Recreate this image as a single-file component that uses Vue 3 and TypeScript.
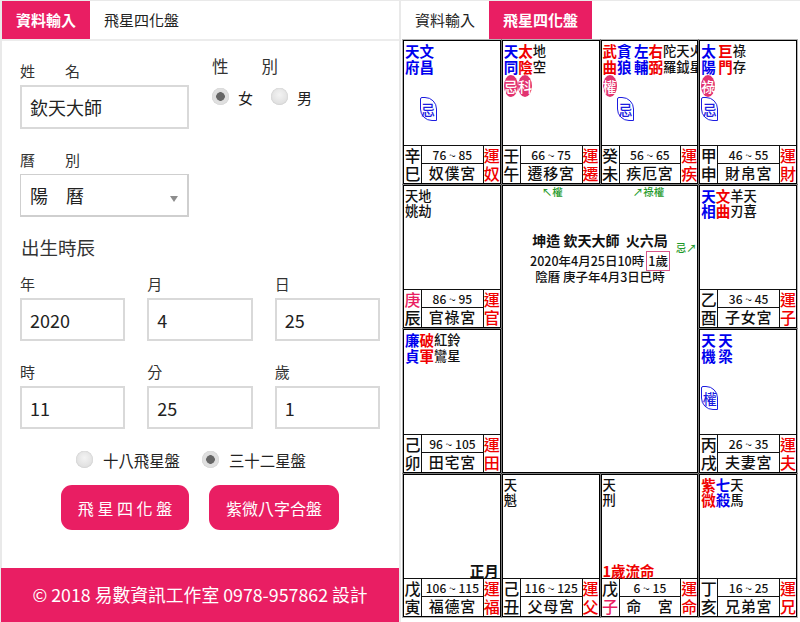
<script setup lang="ts">
interface Star { t: string; c: 'b' | 'r' | 'k'; pink?: string; leaf?: string }
interface Cell {
  stars: Star[]; gan: string; zhi: string; age: string; name: string; yun: string;
  ganPink?: boolean; zhiPink?: boolean; note?: string; noteRed?: boolean;
}
const row1: Cell[] = [
  { stars: [{ t: '天府', c: 'b' }, { t: '文昌', c: 'b', leaf: '忌' }], gan: '辛', zhi: '巳', age: '76 ~ 85', name: '奴僕宮', yun: '奴' },
  { stars: [{ t: '天同', c: 'b', pink: '忌' }, { t: '太陰', c: 'r', pink: '科' }, { t: '地空', c: 'k' }], gan: '壬', zhi: '午', age: '66 ~ 75', name: '遷移宮', yun: '遷' },
  { stars: [{ t: '武曲', c: 'r', pink: '權' }, { t: '貪狼', c: 'b', leaf: '忌' }, { t: '左輔', c: 'b' }, { t: '右弼', c: 'r' }, { t: '陀羅', c: 'k' }, { t: '天鉞', c: 'k' }, { t: '火星', c: 'k' }], gan: '癸', zhi: '未', age: '56 ~ 65', name: '疾厄宮', yun: '疾' },
  { stars: [{ t: '太陽', c: 'b', pink: '祿', leaf: '忌' }, { t: '巨門', c: 'r' }, { t: '祿存', c: 'k' }], gan: '甲', zhi: '申', age: '46 ~ 55', name: '財帛宮', yun: '財' },
]
const left2: Cell = { stars: [{ t: '天姚', c: 'k' }, { t: '地劫', c: 'k' }], gan: '庚', ganPink: true, zhi: '辰', age: '86 ~ 95', name: '官祿宮', yun: '官' }
const right2: Cell = { stars: [{ t: '天相', c: 'b' }, { t: '文曲', c: 'r' }, { t: '羊刃', c: 'k' }, { t: '天喜', c: 'k' }], gan: '乙', zhi: '酉', age: '36 ~ 45', name: '子女宮', yun: '子' }
const left3: Cell = { stars: [{ t: '廉貞', c: 'b' }, { t: '破軍', c: 'r' }, { t: '紅鸞', c: 'k' }, { t: '鈴星', c: 'k' }], gan: '己', zhi: '卯', age: '96 ~ 105', name: '田宅宮', yun: '田' }
const right3: Cell = { stars: [{ t: '天機', c: 'b', leaf: '權' }, { t: '天梁', c: 'b' }], gan: '丙', zhi: '戌', age: '26 ~ 35', name: '夫妻宮', yun: '夫' }
const row4: Cell[] = [
  { stars: [], gan: '戊', zhi: '寅', age: '106 ~ 115', name: '福德宮', yun: '福', note: '正月' },
  { stars: [{ t: '天魁', c: 'k' }], gan: '己', zhi: '丑', age: '116 ~ 125', name: '父母宮', yun: '父' },
  { stars: [{ t: '天刑', c: 'k' }], gan: '戊', zhi: '子', zhiPink: true, age: '6 ~ 15', name: '命　宮', yun: '命', note: '1歲流命', noteRed: true },
  { stars: [{ t: '紫微', c: 'r' }, { t: '七殺', c: 'b' }, { t: '天馬', c: 'k' }], gan: '丁', zhi: '亥', age: '16 ~ 25', name: '兄弟宮', yun: '兄' },
]
const before = [...row1, left2]
const after = [right2, left3, right3, ...row4]
const chart = [
  ...before.map((c) => ({ c, center: false })),
  { c: null as Cell | null, center: true },
  ...after.map((c) => ({ c, center: false })),
]
</script>

<template>
  <div class="page">
    <section class="pane form-pane">
      <nav class="tabs">
        <span class="tab active">資料輸入</span>
        <span class="tab">飛星四化盤</span>
      </nav>
      <div class="form">
        <div class="top-row">
          <div class="name-col">
            <label class="lbl">姓　　名</label>
            <input class="box tall" value="欽天大師" readonly />
            <label class="lbl cal-lbl">曆　　別</label>
            <div class="select-wrap">
              <select class="box sel"><option>陽　曆</option></select>
              <i class="caret"></i>
            </div>
          </div>
          <div class="gender-col">
            <div class="gender-lbl">性　　別</div>
            <div class="radios">
              <input type="radio" name="g" class="radio" checked /><span class="r-text first">女</span>
              <input type="radio" name="g" class="radio" /><span class="r-text">男</span>
            </div>
          </div>
        </div>
        <h2 class="heading">出生時辰</h2>
        <div class="trio">
          <div><label class="lbl">年</label><input class="box" value="2020" readonly /></div>
          <div><label class="lbl">月</label><input class="box" value="4" readonly /></div>
          <div><label class="lbl">日</label><input class="box" value="25" readonly /></div>
          <div><label class="lbl">時</label><input class="box" value="11" readonly /></div>
          <div><label class="lbl">分</label><input class="box" value="25" readonly /></div>
          <div><label class="lbl">歲</label><input class="box" value="1" readonly /></div>
        </div>
        <div class="kind">
          <input type="radio" name="k" class="radio" /><span class="k-text first">十八飛星盤</span>
          <input type="radio" name="k" class="radio" checked /><span class="k-text">三十二星盤</span>
        </div>
        <div class="btns">
          <button class="btn b1">飛 星 四 化 盤</button>
          <button class="btn b2">紫微八字合盤</button>
        </div>
      </div>
      <footer class="foot">© 2018 易數資訊工作室 0978-957862 設計</footer>
    </section>

    <section class="pane chart-pane">
      <nav class="tabs plain">
        <span class="tab">資料輸入</span>
        <span class="tab active">飛星四化盤</span>
      </nav>
      <div class="chart">
        <template v-for="(item, i) in chart" :key="i">
          <div v-if="item.center" class="center">
            <span class="arrow a1">↖權</span>
            <span class="arrow a2">↗祿權</span>
            <span class="arrow a3">忌↗</span>
            <div class="c1">坤造 欽天大師&nbsp; 火六局</div>
            <div class="c2">2020年4月25日10時<span class="age-box">1歲</span></div>
            <div class="c3">陰曆 庚子年4月3日巳時</div>
          </div>
          <div v-else class="cell">
            <div class="stars">
              <div v-for="s in item.c!.stars" :key="s.t" class="col">
                <div class="st" :class="s.c">{{ s.t[0] }}<br />{{ s.t[1] }}</div>
                <div class="slot-p"><span v-if="s.pink" class="pink">{{ s.pink }}</span></div>
                <span v-if="s.leaf" class="leaf">{{ s.leaf }}</span>
              </div>
              <span v-if="item.c!.note" class="note" :class="item.c!.noteRed ? 'red' : 'right'">{{ item.c!.note }}</span>
            </div>
            <div class="info">
              <div class="gz"><span :class="{ pk: item.c!.ganPink }">{{ item.c!.gan }}</span><span :class="{ pk: item.c!.zhiPink }">{{ item.c!.zhi }}</span></div>
              <div class="mid"><div class="age">{{ item.c!.age }}</div><div class="pal">{{ item.c!.name }}</div></div>
              <div class="yun"><span>運</span><span>{{ item.c!.yun }}</span></div>
            </div>
          </div>
        </template>
      </div>
    </section>
  </div>
</template>

<style>
html, body { margin: 0; background: #e9e9e9; }
</style>

<style scoped>
.page {
  width: 800px; height: 622px; overflow: hidden; display: flex; gap: 2px;
  padding: 1px 0 0 2px; box-sizing: border-box; background: #e9e9e9;
  font-family: "Noto Sans CJK TC", "Noto Sans", sans-serif; color: #222;
}
.pane { background: #fff; display: flex; flex-direction: column; height: 621px; }
.form-pane { width: 397px; }
.chart-pane { width: 399px; }
.tabs { display: flex; height: 38px; flex: none; background: #fff; border-bottom: 2px solid #ececec; }
.tabs.plain { border-bottom: 0; height: 38px; }
.tab { padding: 0 14px; line-height: 37px; font-size: 15px; color: #222; }
.tab.active { background: #e91e63; color: #fff; font-weight: 700; }
.form { flex: 1; padding: 16px 19px 0 18px; display: flex; flex-direction: column; }
.top-row { display: flex; gap: 23px; }
.name-col { width: 169px; margin-top: 4px; }
.gender-col { margin-top: -1px; }
.lbl { display: block; font-size: 15px; line-height: 20px; height: 20px; color: #333; }
.box {
  display: block; width: 100%; height: 43px; box-sizing: border-box; border: 2px solid #d9d9d9;
  margin: 4px 0 0; padding: 0 8px; font: 400 18px "Noto Sans CJK TC", sans-serif; color: #222;
  background: #fff; border-radius: 0; outline: none;
}
.box.tall { height: 44px; }
.cal-lbl { margin-top: 21px; }
.select-wrap { position: relative; }
.sel { appearance: none; -webkit-appearance: none; padding-left: 9px; border-width: 1px 2px 2px 1px; border-color: #cfcfcf; }
.caret {
  position: absolute; right: 11px; top: 22px; width: 0; height: 0;
  border-left: 4px solid transparent; border-right: 4px solid transparent; border-top: 6px solid #8d8d8d;
}
.gender-lbl { font-size: 16.5px; line-height: 20px; color: #333; }
.radios { display: flex; align-items: center; margin-top: 11px; height: 18px; }
.radio {
  appearance: none; -webkit-appearance: none; width: 17px; height: 17px; margin: 0; flex: none;
  border-radius: 50%; border: 0;
  background: radial-gradient(circle at 50% 40%, #f3f3f3, #d8d8d8 100%);
  box-shadow: inset 0 0 1px #aaa;
}
.radio:checked { background: radial-gradient(circle, #666 0, #666 4px, #ddd 4.6px, #e9e9e9 100%); }
.r-text { font-size: 15px; margin: 3px 0 0 9px; line-height: 18px; }
.r-text.first { margin-right: 18px; }
.heading { margin: 18px 0 0 1px; font-size: 18.5px; line-height: 24px; font-weight: 400; color: #333; }
.trio { display: grid; grid-template-columns: repeat(3, 1fr); column-gap: 22px; row-gap: 21px; margin-top: 15px; }
.kind { display: flex; align-items: center; justify-content: flex-start; margin: 21px 0 0 56px; height: 18px; }
.k-text { font-size: 15.4px; margin: 2px 0 0 10px; line-height: 20px; color: #222; }
.k-text.first { margin-right: 22px; }
.btns { display: flex; gap: 20px; margin: 17px 0 0 41px; }
.btn {
  height: 45px; border: 0; border-radius: 11px; background: #e91e63; color: #fff; padding: 0;
  font: 400 16px "Noto Sans CJK TC", sans-serif;
}
.b1 { width: 128px; }
.b2 { width: 130px; }
.foot {
  height: 54px; line-height: 53px; background: #e91e63; color: #fff; text-align: center;
  font-size: 17.8px; margin-left: -1px; flex: none;
}
.chart {
  display: grid; grid-template-columns: repeat(4, 97.75px); grid-template-rows: repeat(4, 143.5px);
  gap: 1px; margin: 1px 0 0 2px; color: #111;
}
.cell { border: 1px solid #000; box-shadow: 0 0 0 1px rgba(0,0,0,.3); box-sizing: border-box; display: flex; flex-direction: column; overflow: hidden; min-width: 0; }
.center { grid-column: span 2; grid-row: span 2; border: 1px solid #000; box-shadow: 0 0 0 1px rgba(0,0,0,.3); box-sizing: border-box; position: relative; text-align: center; padding-top: 44px; }
.stars { flex: 1; display: flex; position: relative; padding: 2px 0 0 1px; min-height: 0; white-space: nowrap; }
.col { flex: none; display: flex; flex-direction: column; align-items: flex-start; }
.st { font-size: 14.5px; line-height: 15.5px; font-weight: 700; }
.st.b { color: #0000ee; }
.st.r { color: #f00000; }
.st.k { color: #111; font-size: 13.3px; font-weight: 500; }
.slot-p { height: 22px; margin-top: 1px; }
.pink {
  display: block; width: 14px; height: 22px; border-radius: 50%; background: #e23370; color: #fff;
  font-size: 14px; font-weight: 500; line-height: 22px; text-align: center;
}
.leaf {
  display: block; width: 17px; height: 24px; box-sizing: border-box; border: 1px solid #1c1ce0; color: #1c1ce0;
  border-radius: 2px 12px 0 12px; font-size: 14px; font-weight: 500; line-height: 22px; text-align: center; margin-left: 0;
}
.note { position: absolute; z-index: 1; left: 1px; bottom: -1px; font-size: 14.5px; font-weight: 700; line-height: 16px; }
.note.red { color: #f00000; }
.note.right { left: auto; right: 1px; color: #111; }
.info { flex: none; height: 38px; border-top: 1px solid #111; display: grid; grid-template-columns: 17px 1fr 17px; box-sizing: border-box; }
.gz, .yun { display: flex; flex-direction: column; font-size: 16px; line-height: 18px; text-align: center; font-weight: 500; }
.gz { color: #111; }
.pk { color: #e91e63; }
.yun { color: #f00000; border-left: 1px solid #111; }
.mid { border-left: 1px solid #111; display: flex; flex-direction: column; min-width: 0; }
.age { height: 18px; line-height: 17px; font-size: 12px; font-weight: 500; text-align: center; border-bottom: 1px solid #111; box-sizing: border-box; white-space: nowrap; }
.pal { flex: 1; font-size: 15px; line-height: 18px; font-weight: 500; text-align: center; letter-spacing: 0.8px; white-space: nowrap; }
.c1 { font-size: 14px; font-weight: 700; line-height: 20px; }
.c2 { font-size: 12.5px; font-weight: 500; line-height: 19px; margin-top: 1px; }
.c3 { font-size: 12.5px; font-weight: 500; line-height: 16px; margin-top: -2px; }
.age-box { display: inline-block; border: 1px solid #d9558a; padding: 0 1px; margin-left: 2px; height: 18px; line-height: 18px; }
.arrow { position: absolute; color: #1f9a2b; font-size: 10.5px; font-weight: 500; line-height: 12px; white-space: nowrap; }
.a1 { left: 39px; top: 0; }
.a2 { left: 130px; top: 0; }
.a3 { left: 173px; top: 56px; }
</style>
